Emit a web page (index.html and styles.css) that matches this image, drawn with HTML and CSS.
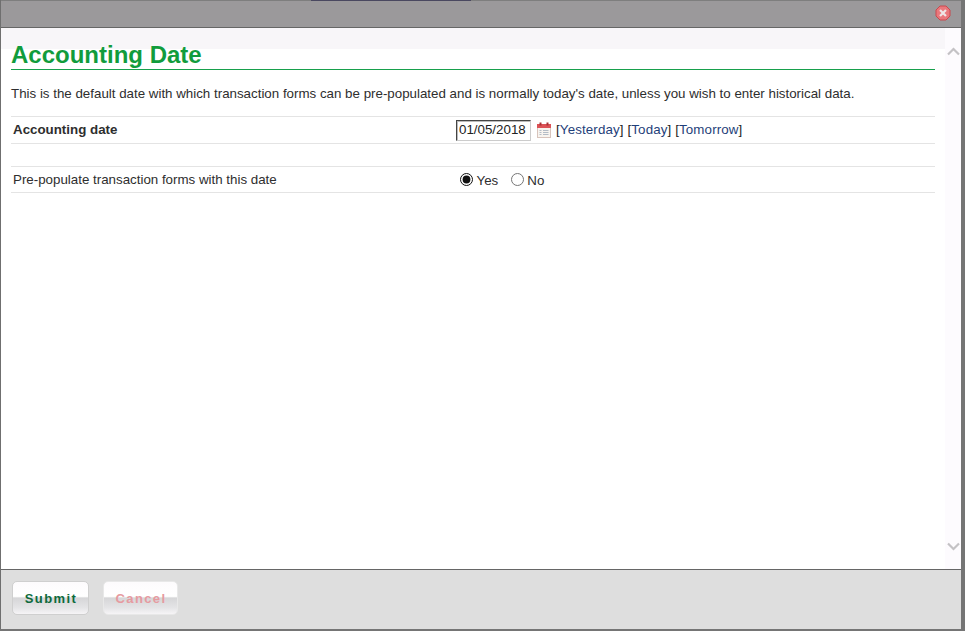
FILE: index.html
```html
<!DOCTYPE html>
<html lang="en">
<head>
<meta charset="utf-8">
<title>Accounting Date</title>
<link rel="stylesheet" href="styles.css">
</head>
<body>
<div class="dialog">
  <header class="titlebar">
    <span class="backdrop-strip"></span>
    <svg class="close" width="16" height="16" viewBox="0 0 16 16" aria-label="Close">
      <path d="M5 1h6l4 4v6l-4 4H5l-4-4V5z" fill="#e9787c" stroke="#c9484e"/>
      <path d="M5 5l6 6M11 5l-6 6" stroke="#efe6e6" stroke-width="2.200"/>
    </svg>
  </header>
  <div class="middle">
    <main class="content">
      <div class="band"></div>
      <h1 class="heading">Accounting Date</h1>
      <p class="intro">This is the default date with which transaction forms can be pre-populated and is normally today's date, unless you wish to enter historical data.</p>
      <div class="row row-date">
        <div class="label label-bold">Accounting date</div>
        <div class="field field-date">
          <input class="date-input" type="text" value="01/05/2018">
          <svg class="cal" width="16" height="16" viewBox="0 0 16 16">
            <rect x="1.500" y="2.500" width="13" height="13" fill="#f8f4ef" stroke="#d8c4bc"/>
            <rect x="1" y="2" width="14" height="4" fill="#dc5256"/>
            <rect x="3.500" y="0.500" width="2" height="3" fill="#a93235"/>
            <rect x="10.500" y="0.500" width="2" height="3" fill="#a93235"/>
            <path d="M3.500 8.500h2M7 8.500h5.500M3.500 10.500h2M7 10.500h5.500M3.500 12.500h2M7 12.500h5.500" stroke="#b4bcc6"/>
          </svg>
          <span class="links">[<a href="#">Yesterday</a>] [<a href="#">Today</a>] [<a href="#">Tomorrow</a>]</span>
        </div>
      </div>
      <div class="row row-populate">
        <div class="label">Pre-populate transaction forms with this date</div>
        <div class="field radios">
          <label class="radio"><input type="radio" name="pop" checked><span>Yes</span></label>
          <label class="radio"><input type="radio" name="pop"><span>No</span></label>
        </div>
      </div>
    </main>
    <aside class="scroll">
      <svg width="13" height="9" viewBox="0 0 13 9"><path d="M1 7.500l5.500-5.500 5.500 5.500" fill="none" stroke="#c4c2c5" stroke-width="2.200"/></svg>
      <svg width="13" height="9" viewBox="0 0 13 9"><path d="M1 1.500l5.500 5.500 5.500-5.500" fill="none" stroke="#c4c2c5" stroke-width="2.200"/></svg>
    </aside>
  </div>
  <footer class="footer">
    <button class="btn btn-submit" type="button">Submit</button>
    <button class="btn btn-cancel" type="button">Cancel</button>
  </footer>
</div>
</body>
</html>
```
FILE: styles.css
```css
html, body {
  margin: 0;
  height: 100%;
  overflow: hidden;
  background: #757575;
}
body {
  font-family: "Liberation Sans", Arial, sans-serif;
  font-size: 13.330px;
  color: #2e2e2e;
}
.dialog {
  width: 961px;
  height: 629px;
  border-left: 1px solid #6f6f6f;
  box-sizing: border-box;
  display: flex;
  flex-direction: column;
}
.titlebar {
  height: 28px;
  box-sizing: border-box;
  background: #9b999b;
  border-bottom: 1px solid #666;
  border-top: 1px solid #7e7e7e;
  position: relative;
  flex: none;
}
.backdrop-strip {
  position: absolute;
  left: 310px;
  top: -1px;
  width: 160px;
  height: 1px;
  background: #4a4860;
}
.close {
  position: absolute;
  right: 10px;
  top: 4px;
}
.middle {
  flex: 1;
  display: flex;
  min-height: 0;
  background: #fff;
}
.content {
  position: relative;
  width: 944px;
  padding: 0 10px;
  box-sizing: border-box;
}
.band {
  position: absolute;
  left: 0;
  right: 0;
  top: 0;
  height: 21px;
  background: #f8f6f9;
}
.heading {
  position: relative;
  margin: 0;
  padding-top: 12px;
  height: 29px;
  font-size: 24px;
  line-height: 29px;
  font-weight: bold;
  color: #119c3c;
  border-bottom: 1px solid #17a04c;
}
.intro {
  margin: 16px 0 0;
  line-height: 16px;
}
.row {
  display: flex;
  align-items: center;
  border-top: 1px solid #e4e4e4;
  border-bottom: 1px solid #e4e4e4;
  box-sizing: border-box;
}
.row-date {
  margin-top: 14px;
  height: 28px;
  align-items: flex-start;
  padding-top: 3px;
}
.row-date .label {
  margin-top: 2px;
}
.row-populate {
  margin-top: 22px;
  height: 27px;
}
.label {
  width: 445px;
  padding-left: 2px;
  flex: none;
  box-sizing: border-box;
}
.label-bold {
  font-weight: bold;
}
.field {
  display: flex;
  align-items: center;
}
.field-date {
  align-items: flex-start;
}
.date-input {
  width: 75px;
  height: 21px;
  box-sizing: border-box;
  padding: 0 2px 2px;
  margin: 0;
  font: 13.330px "Liberation Sans", Arial, sans-serif;
  color: #222;
  border: 1px solid #ccc;
  border-top-color: #444;
  border-left-color: #444;
  border-radius: 0;
  background: #fff;
  box-shadow: inset 1px 1px 0 #bbb;
}
.cal {
  margin: 2px 4px 0 5px;
}
.links {
  margin-top: 2px;
  color: #222;
  letter-spacing: 0.130px;
}
.links a {
  color: #1f3f7a;
  text-decoration: none;
}
.radios {
  gap: 12.500px;
  padding-left: 4px;
}
.radio {
  display: flex;
  align-items: center;
  gap: 3.500px;
}
.radio input {
  margin: 0;
  width: 13px;
  height: 13px;
  accent-color: #111;
}
.radio span {
  position: relative;
  top: 1px;
}
.scroll {
  width: 16px;
  flex: none;
  background: #fdfbfe;
  display: flex;
  flex-direction: column;
  justify-content: space-between;
  align-items: center;
  padding: 19px 0 18px;
  box-sizing: border-box;
}
.footer {
  flex: none;
  height: 60px;
  box-sizing: border-box;
  background: #dedede;
  border-top: 1px solid #666;
  padding: 11px 0 0 11px;
  display: flex;
  align-items: flex-start;
  gap: 14px;
}
.btn {
  width: 77px;
  height: 34px;
  border: 1px solid #cfcfcf;
  border-radius: 5px;
  font: bold 13px "Liberation Sans", Arial, sans-serif;
  letter-spacing: 1.400px;
  background: linear-gradient(#fdfbfd 0%, #fff 45%, #d6d6d8 50%, #e4e4e6 80%, #f6f4f6 100%);
  padding: 0 0 0 1px;
}
.btn-submit {
  color: #0e6a3c;
}
.btn-cancel {
  width: 75px;
  color: #e69aa0;
  border-color: #e8e8e8;
}
```
